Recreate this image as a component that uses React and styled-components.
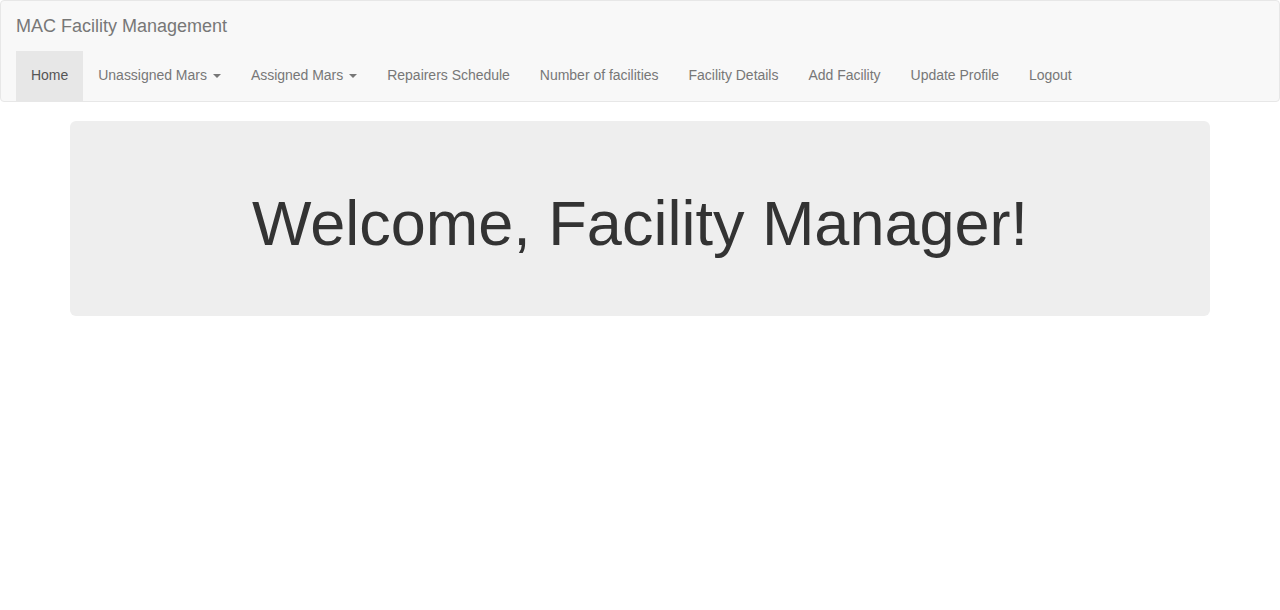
import React from "react"
import styled, { createGlobalStyle } from "styled-components"

const GlobalStyle = createGlobalStyle`
  * {
    box-sizing: border-box;
  }
  body {
    margin: 0;
    font-family: "Liberation Sans", Arial, sans-serif;
    font-size: 14px;
    line-height: 1.42857143;
    color: #333;
    background: #fff;
  }
`

const Navbar = styled.nav`
  background: #f8f8f8;
  border: 1px solid #e7e7e7;
  border-radius: 4px;
  margin-bottom: 19px;
  padding: 0 15px;
`

const Brand = styled.a`
  display: block;
  height: 50px;
  padding: 15px 0;
  font-size: 18px;
  line-height: 20px;
  color: #777;
  text-decoration: none;
`

const NavList = styled.ul`
  display: flex;
  list-style: none;
  margin: 0;
  padding: 0;
`

const NavLink = styled.a`
  display: block;
  padding: 14px 15px 16px;
  line-height: 20px;
  letter-spacing: -0.02px;
  color: ${props => (props.active ? "#555" : "#777")};
  background: ${props => (props.active ? "#e7e7e7" : "transparent")};
  text-decoration: none;
  white-space: nowrap;
`

const Caret = styled.span`
  display: inline-block;
  width: 0;
  height: 0;
  margin-left: 6px;
  vertical-align: middle;
  border-top: 4px solid;
  border-left: 4px solid transparent;
  border-right: 4px solid transparent;
`

const Container = styled.div`
  width: 1170px;
  margin: 0 auto;
  padding: 0 15px;
`

const Jumbotron = styled.div`
  background: #eee;
  border-radius: 6px;
  padding: 48px 60px;
  text-align: center;
`

const Title = styled.h1`
  margin: 20px 0 10px;
  font-size: 63px;
  font-weight: 500;
  line-height: 1.1;
  color: #333;
`

const items = [
  { label: "Home", active: true },
  { label: "Unassigned Mars", dropdown: true },
  { label: "Assigned Mars", dropdown: true },
  { label: "Repairers Schedule" },
  { label: "Number of facilities" },
  { label: "Facility Details" },
  { label: "Add Facility" },
  { label: "Update Profile" },
  { label: "Logout" },
]

const App = () => (
  <>
    <GlobalStyle />
    <Navbar>
      <Brand href="#">MAC Facility Management</Brand>
      <NavList>
        {items.map(item => (
          <li key={item.label}>
            <NavLink href="#" active={item.active}>
              {item.label}
              {item.dropdown && <Caret />}
            </NavLink>
          </li>
        ))}
      </NavList>
    </Navbar>
    <Container>
      <Jumbotron>
        <Title>Welcome, Facility Manager!</Title>
      </Jumbotron>
    </Container>
  </>
)

export default App
